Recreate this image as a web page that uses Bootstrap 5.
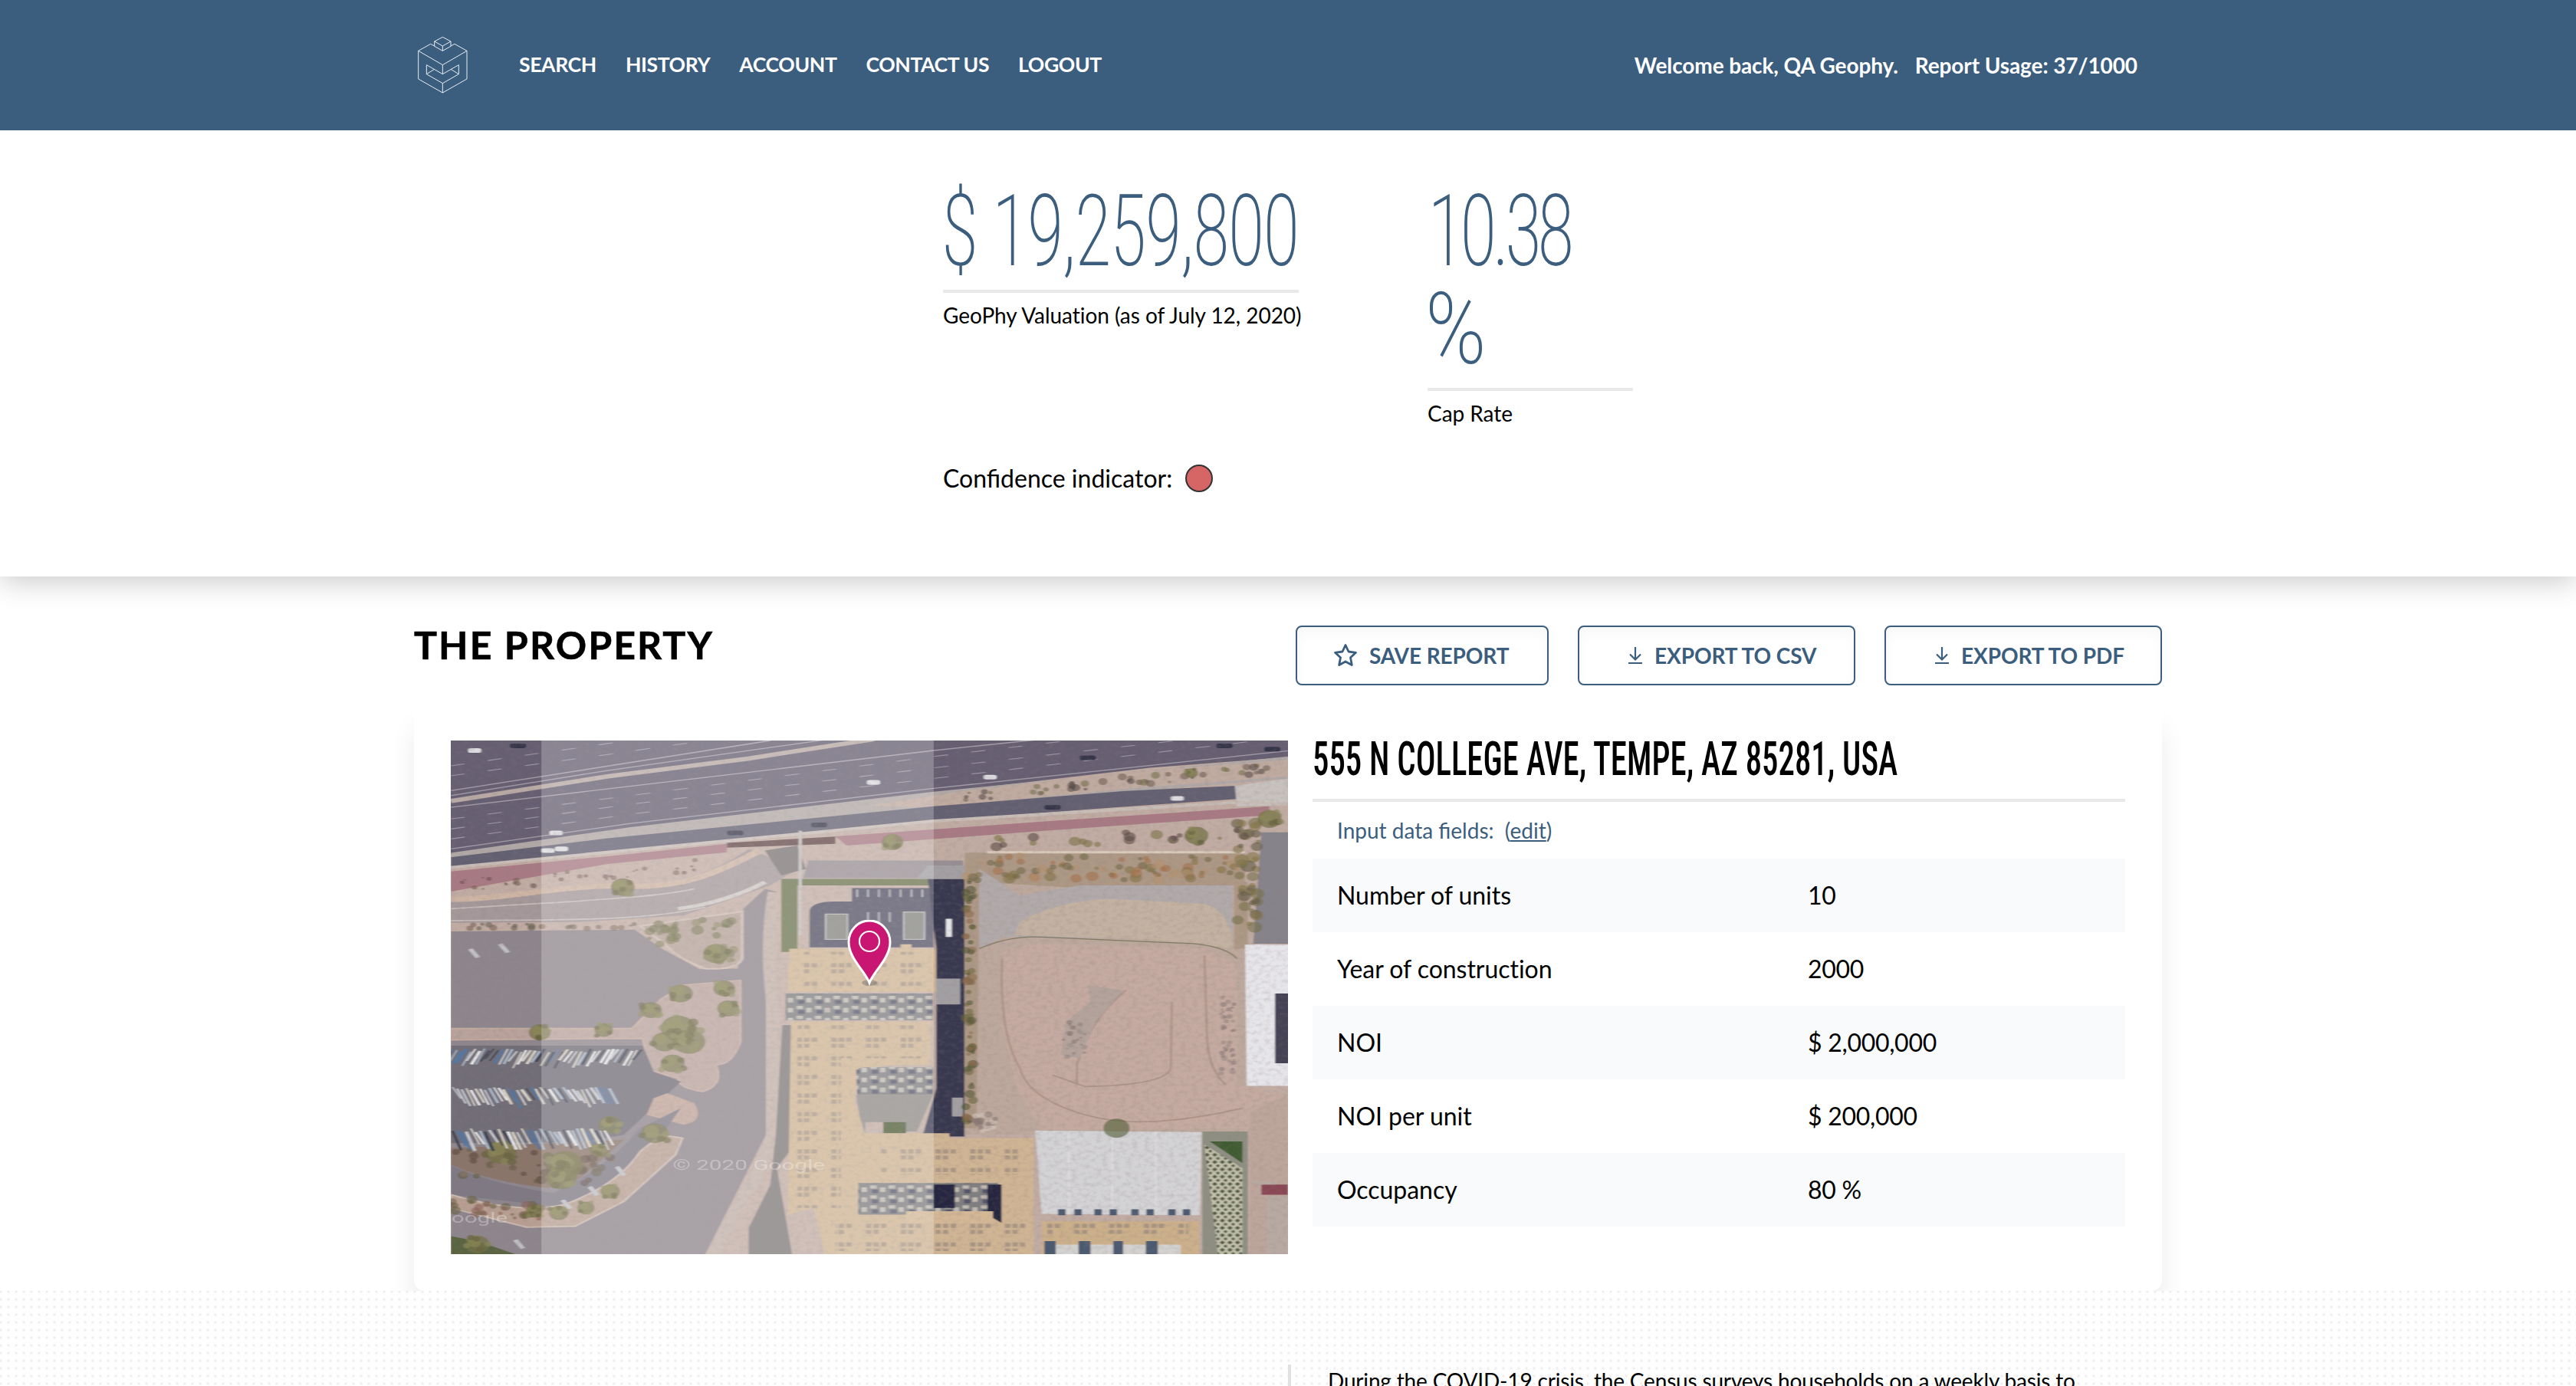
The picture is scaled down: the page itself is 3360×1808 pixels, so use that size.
<!DOCTYPE html>
<html lang="en">
<head>
<meta charset="utf-8">
<title>GeoPhy Valuation Report</title>
<link href="https://cdn.jsdelivr.net/npm/bootstrap@5.3.0/dist/css/bootstrap.min.css" rel="stylesheet">
<style>
:root{--brand:#3b5d7e}
body{font-family:Lato,"Open Sans",sans-serif;font-size:28px;line-height:42px;color:#000;background:#fff;height:1808px;overflow:hidden}
.wrap{width:2280px;margin:0 auto}
.topbar{background:var(--brand);height:170px;font-weight:700;color:#fff;padding:0}
.topbar .nav-link{color:#fff;padding:0;font-size:26.6px;letter-spacing:-.4px}
.topbar .logo{width:75px;height:78px;display:block;margin-right:62px}
.topbar .menu{gap:38px;padding-bottom:2px}
.topbar .greet{margin-right:32px;gap:22px;letter-spacing:-.1px}
.hero{height:582px;padding-top:68px;box-shadow:0 6px 36px rgba(0,0,0,.22);clip-path:inset(0 0 -60px 0);background:#fff}
.hero-in{margin-left:690px}
.figure-v{width:464px;margin-right:168px}
.figure-c{width:268px}
.bignum{font-family:"Roboto Condensed",Roboto,sans-serif;font-weight:200;font-size:129px;line-height:128px;color:var(--brand);white-space:nowrap}
.bignum span{display:block;width:max-content;height:128px;transform-origin:0 0}
.n-val{transform:scaleX(.77);letter-spacing:-3px;margin-left:-2px}
.n-cap{transform:scaleX(.77);letter-spacing:-7.6px}
.n-pct{transform:scaleX(.98);margin-left:-4px}
.bar{height:4px;background:#e8e8e8}
.bignum + .bar{margin:12px 0 8px}
.cap-label{letter-spacing:-.04px;white-space:nowrap}
.conf{font-size:32px;line-height:48px;margin-top:40px}
.lamp{width:36px;height:36px;border-radius:50%;background:#d66565;border:2px solid #333;margin:0 0 0 17px}
.prop-title{font-size:50px;line-height:60px;font-weight:700;letter-spacing:2.1px;margin:0;-webkit-text-stroke:.6px #000}
.prop{padding-top:59px}
.btn-rep{height:78px;border:2px solid var(--brand);border-radius:8px;color:var(--brand);font-weight:700;font-size:28px;letter-spacing:-.1px;padding:0;display:flex;align-items:center;line-height:42px;box-shadow:inset 0 8px 16px rgba(0,0,0,.03)}
.btns{gap:38px;margin-top:5px}
.pcard{margin-top:24px;height:766px;border:0;border-radius:14px;padding:48px;box-shadow:0 32px 36px rgba(0,0,0,.08);clip-path:inset(0 -60px 0 -60px)}
.mapbox{width:1092px;height:670px;margin-right:32px;position:relative;flex:none}
.mapbox .sat{display:block;width:1092px;height:670px}
.pin{position:absolute;left:516px;top:234px;width:60px;height:90px}
.info{flex:1 1 0;min-width:0}
.addr{font-family:"Roboto Condensed",Roboto,sans-serif;font-weight:500;font-size:60.5px;line-height:70px;margin:-10px 0 16px;width:max-content;transform-origin:0 0;white-space:nowrap;transform:scaleX(.708)}
.infield{color:var(--brand);margin:16px 0;padding-left:32px}
.infield a{color:var(--brand)}
.facts>div{height:96px;font-size:32px;line-height:48px;padding:0 0 0 32px;letter-spacing:-.04px}
.facts>div:nth-child(odd){background:#f9fafc}
.facts span:first-child{width:614px}
.facts span:last-child{letter-spacing:-.3px}
.dots{height:124px;padding-top:96px;overflow:hidden;background:radial-gradient(circle at 50% 50%,#e9e9ec 0,#f6f6f7 1.6px,#fefefe 2.6px) -4px -4px/10px 10px}
.covid{margin-left:1140px;border-left:4px solid #e0e0e0;padding-left:48px;height:60px;white-space:nowrap;letter-spacing:-.17px}
</style>
</head>
<body>
<nav class="topbar"><div class="wrap d-flex align-items-center h-100">
  <svg class="logo" viewBox="30 50 225 234" fill="none" stroke="#e8eef3" stroke-width="3"><path d="M142 166 47 111V221L142 275 237 221V111L189 84 174 92M110 92 95 84 47 111M142 166 237 111M142 166V202L79 166V202L142 238 205 202V166L142 202M142 238V275M79 202 110 183M205 202 174 183M142 57 110 74 142 92 174 74ZM110 74V93L142 111 174 93V74M142 92V111"/></svg>
  <div class="menu d-flex"><a class="nav-link" href="#">SEARCH</a><a class="nav-link" href="#">HISTORY</a><a class="nav-link" href="#">ACCOUNT</a><a class="nav-link" href="#">CONTACT US</a><a class="nav-link" href="#">LOGOUT</a></div>
  <div class="greet d-flex ms-auto"><span>Welcome back, QA Geophy.</span><span>Report Usage: 37/1000</span></div>
</div></nav>

<section class="hero"><div class="wrap"><div class="hero-in">
  <div class="d-flex align-items-start">
    <div class="figure-v"><div class="bignum"><span class="n-val">$ 19,259,800</span></div><div class="bar"></div><div class="cap-label">GeoPhy Valuation (as of July 12, 2020)</div></div>
    <div class="figure-c"><div class="bignum"><span class="n-cap">10.38</span><span class="n-pct">%</span></div><div class="bar"></div><div class="cap-label">Cap Rate</div></div>
  </div>
  <div class="conf d-flex align-items-center">Confidence indicator:<span class="lamp"></span></div>
</div></div></section>

<section class="prop wrap">
  <div class="d-flex justify-content-between align-items-start">
    <h2 class="prop-title">THE PROPERTY</h2>
    <div class="btns d-flex">
      <button class="btn btn-rep" style="width:330px;padding-left:46px"><svg width="34" height="34" viewBox="0 0 34 34" fill="none" stroke="#3b5d7e" stroke-width="2.8" stroke-linejoin="round" style="margin-right:14px"><path d="M17 3.500 21 12 30.500 13.300 23.500 19.800 25.300 29.500 17 25 8.700 29.500 10.500 19.800 3.500 13.300 13 12Z"/></svg>SAVE REPORT</button>
      <button class="btn btn-rep" style="width:362px;padding-left:63px"><svg width="20" height="24" viewBox="0 0 20 24" fill="none" stroke="#3b5d7e" stroke-width="2.200" style="margin-right:15px"><path d="M10 1V17M3 10.500 10 17.500 17 10.500M1 22H19"/></svg>EXPORT TO CSV</button>
      <button class="btn btn-rep" style="width:362px;padding-left:63px"><svg width="20" height="24" viewBox="0 0 20 24" fill="none" stroke="#3b5d7e" stroke-width="2.200" style="margin-right:15px"><path d="M10 1V17M3 10.500 10 17.500 17 10.500M1 22H19"/></svg>EXPORT TO PDF</button>
    </div>
  </div>
  <div class="card pcard flex-row">
    <div class="mapbox">
      <svg class="sat" viewBox="11 14 1543 1545" preserveAspectRatio="none">
        <defs>
          <pattern id="roof" width="64" height="56" patternUnits="userSpaceOnUse"><path d="M8 12h10v12H8zM22 12h10v12H22zM36 12h10v12H36zM8 30h10v12H8zM22 30h10v12H22z" fill="#a08f80" opacity=".8"/></pattern>
          <pattern id="balc" width="34" height="30" patternUnits="userSpaceOnUse"><path fill="#7f7e80" d="M0 0h34v30H0z"/><path fill="#c0bab2" d="M2 2h12v10H2zM20 8h10v14H20z"/><path fill="#55566a" d="M5 15h12v11H5z"/></pattern>
          <pattern id="check" width="14" height="22" patternUnits="userSpaceOnUse"><path fill="#c3c2ac" d="M0 0h14v22H0z"/><path fill="#4f5741" d="M0 6 5 0 10 6 5 12ZM7 17l4-5 4 5-4 5Z"/></pattern>
          <filter id="soft"><feGaussianBlur stdDeviation="1.700"/></filter>
          <filter id="ground" x="0" y="0" width="100%" height="100%"><feTurbulence type="fractalNoise" baseFrequency=".09" numOctaves="4" seed="4"/><feColorMatrix values="0 0 0 0 .25 0 0 0 0 .2 0 0 0 0 .2 1.600 0 0 0 -.68"/></filter>
        </defs>
        <g filter="url(#soft)">
        <path fill="#c1aca3" d="M0 0H1570V1570H0z"/>
        <path fill="#665f72" d="M0 0H1570V62L1300 96 901 172 600 232 300 296 0 358z"/>
        <path d="M11 250 340 180 901 62 1150 14M11 280 340 206 901 96 1350 14M11 310 340 236 901 128 1500 14M11 120 300 56 480 14M11 90 340 14" stroke="#9d97a5" stroke-width="2.500" stroke-dasharray="26 44" fill="none"/>
        <path d="M11 196 300 122 560 68 790 10" stroke="#b9aaa5" stroke-width="13" fill="none"/>
        <path d="M11 180 300 104 700 12M11 165 600 14M11 215 901 44 1100 10M11 340 340 264 901 158 1554 45" stroke="#a49daa" stroke-width="3" fill="none"/>
        <path d="M11 352 340 275 901 168 1554 62 1554 128 901 222 300 318 11 378z" fill="#b0a8a6"/>
        <path d="M780 210 960 165 1230 112 1554 72 1554 122 1250 160 901 215z" fill="#c0aba1"/>
        <path d="M11 365 300 308 901 212 1250 166 1460 150 1460 190 1230 216 901 256 300 350 11 396z" fill="#646072"/>
        <path d="M1456 150 1554 128V208L1460 212z" fill="#c8c2bf"/>
        <path d="M11 396 300 350 901 256 1460 200 1554 205" stroke="#c8bcb7" stroke-width="9" fill="none"/>
        <path d="M11 408 300 362 520 325V350L300 385 11 468zM720 302 1100 258 1520 212 1520 238 1100 286 740 330z" fill="#a87a83"/>
        <path d="M520 322 720 303V325L520 336z" fill="#65494a"/>
        <path d="M11 490C120 490 200 450 300 452S480 430 560 340L650 400 600 450 440 540 250 560 11 562z" fill="#a5989a"/>
        <path d="M11 492C120 490 220 448 320 452S470 440 580 345" stroke="#cdb4a4" stroke-width="16" fill="none"/>
        <path d="M430 520Q520 500 590 440" stroke="#cfc8c6" stroke-width="10" fill="none"/>
        <path d="M11 520C200 500 380 490 460 460M11 556C200 552 360 560 480 515" stroke="#c5bcba" stroke-width="4" fill="none"/>
        <path d="M590 345 650 330 665 400 620 420z" fill="#7b7475"/>
        <path fill="#8e868d" d="M11 588 350 583 400 640 470 702 540 700 550 520 590 460 612 470 592 600 592 1200 480 1559H11z"/>
        <path fill="#988f94" d="M670 375H955V428H660z"/>
        <path fill="#b5a297" d="M360 572 548 528V670Q540 705 480 700 430 670 405 625z" stroke="#cdbab0" stroke-width="5"/>
        <path fill="#b9a29b" d="M400 790 440 750 545 735V920Q530 990 500 990 515 1050 475 1070 430 1060 430 1030L375 1005 365 910 11 915V880H345z" stroke="#c5aaa0" stroke-width="4"/>
        <path d="M11 932H365L385 1010 435 1040 330 1200 250 1222 11 1225z" fill="#716d77"/>
        <path fill="#c0a398" d="M385 1090 410 1075 460 1105Q480 1160 440 1170L372 1140z"/>
        <path fill="#8a746a" d="M11 1240 330 1215 300 1260 250 1330 190 1360Q80 1340 11 1290z"/>
        <path fill="#7f7984" d="M11 1292Q90 1350 200 1375 300 1300 360 1180L435 1120 400 1200 330 1330 230 1420 11 1380z"/>
        <path fill="#b89f92" d="M400 1200 438 1210 425 1260 330 1400 240 1475 150 1478 11 1420V1380Q140 1440 220 1410 320 1350 360 1250z" stroke="#cbbab0" stroke-width="4"/>
        <path fill="#596440" d="M11 1505 60 1520 130 1559H11z"/>
        <path d="M606 470Q590 620 603 800V1200Q590 1300 530 1440L495 1559" stroke="#c1b0a8" stroke-width="22" fill="none"/>
        <path fill="#7f7979" d="M622 870H640V1240L612 1300 640 1559H560L560 1480 600 1350 610 1200z"/>
        <path fill="#6d7650" d="M620 430H900V450H650V650H620z"/>
        <path fill="#525165" d="M672 530Q672 498 720 498H750V458H901V636H672z"/>
        <path d="M702 536H742V612H702zM846 530H884V612H846z" fill="#858580" stroke="#b5b5b5" stroke-width="3"/>
        <path d="M760 462V485M780 462V485M800 462V485M820 462V485M840 462V485M860 462V485M880 462V485M780 530V560M800 530V560M820 530V560" stroke="#b3b3bb" stroke-width="3"/>
        <path d="M655 285V600" stroke="#c3bcbb" stroke-width="6"/>
        <path fill="#38374f" d="M890 430H958V1205H880L906 1060V640z"/>
        <path fill="#a3a0a4" d="M905 730H950V808H905zM935 1088H955V1145H935zM890 390H958V430H870z"/>
        <path d="M929 550V605" stroke="#e4e5e6" stroke-width="11"/>
        <path fill="#d0b594" d="M635 640H840V627H860V640H905V770H632zM638 860H895V990H830L765 1000 755 1100 768 1150 770 1230 765 1559H700L680 1420 632 1440zM765 1195H930V1210H1085V1559H700V1430H760z"/>
        <path fill="url(#roof)" d="M660 650H890V755H660zM650 870H890V970H730V1420H650zM800 1220H1060V1320H800zM720 1450H1070V1550H720z"/>
        <path fill="url(#balc)" d="M628 775H900V855H628zM758 1005Q765 995 780 997H900V1080H760zM762 1345H1020V1440H762z"/>
        <path fill="#918c88" d="M758 1080H900L870 1190H808V1162H775V1195L765 1150z"/>
        <path fill="#27283f" d="M901 1350H940V1420H901zM1000 1350H1026V1465L1000 1440z"/>
        <path fill="#d4b896" d="M850 1430H1010V1465H850z"/>
        <path fill="#4f5c34" d="M808 1162H850V1195H808z"/>
        <path fill="#bda89d" d="M958 350H1475V1200H958z"/>
        <path fill="#ad9885" d="M958 352H1475V450H1455L1300 470 985 440 980 1180H958zM1455 440H1480V640H1455z"/>
        <path fill="#b2aaaa" d="M985 400 1060 480 1170 450 1452 450V640L1300 610 1030 605 985 640z"/>
        <path fill="#c3b1a1" d="M1060 560Q1120 500 1220 490L1400 505Q1452 530 1452 640L1300 612 1050 600z"/>
        <path fill="#c4aaa0" d="M1030 650 1080 625 1400 640 1460 690V1050L1554 1080V1180L1100 1185 1055 1060 1025 860z"/>
        <path d="M1027 670Q1022 900 1060 1000 1075 1090 1180 1140T1470 1120M1400 660 1405 920Q1410 1010 1440 1050M1340 800 1338 1000Q1330 1050 1180 1055L1120 1020M1255 765Q1190 850 1165 990L1165 1050" stroke="#ad9388" stroke-width="4" fill="none"/>
        <path d="M985 640Q1040 600 1100 605L1380 625Q1440 635 1460 670" stroke="#7f7a63" stroke-width="3" fill="none"/>
        <path fill="#b3a39c" d="M1185 750 1250 765 1200 860 1170 970 1135 960 1145 860 1190 800z"/>
        <path d="M1000 350H1475" stroke="#d9cbbb" stroke-width="7"/>
        <path fill="#86838a" d="M1505 290H1560V625H1490z"/>
        <path fill="#e6e5e9" d="M1475 628H1560V1053H1478z"/><path fill="#454254" d="M1530 775H1560V985H1530z"/>
        <path fill="#d3d2d4" d="M1088 1187 1395 1192 1392 1442 1100 1438z"/>
        <path d="M1150 1190V1440M1230 1190V1440M1310 1190V1440" stroke="#dedddd" stroke-width="3"/>
        <path fill="#ccb08b" d="M1100 1460H1390V1559H1100z"/><path fill="url(#roof)" d="M1110 1466H1370V1510H1110z"/>
        <path fill="#d3d2d0" d="M1126 1530H1168V1559H1126zM1190 1530H1232V1559H1190zM1250 1530H1292V1559H1250zM1314 1530H1356V1559H1314z"/>
        <path fill="#4b5a70" d="M1105 1520H1126V1559H1105zM1168 1520H1190V1559H1168zM1232 1520H1250V1559H1232zM1292 1520H1314V1559H1292zM1130 1424h14v18h-14zM1160 1424h14v18h-14zM1197 1424h14v18h-14zM1225 1424h14v18h-14zM1265 1424h14v18h-14zM1293 1424h14v18h-14zM1333 1424h14v18h-14zM1360 1424h14v18h-14z"/>
        <path fill="#8e8f82" d="M1396 1190H1480V1559H1396z"/><path fill="url(#check)" d="M1400 1230 1470 1300V1559H1425z"/>
        <path fill="#405b31" d="M1410 1220H1470V1285z"/>
        <path fill="#bca59b" d="M1484 1130 1554 1080V1559H1484z"/><path fill="#8a4654" d="M1505 1350H1554V1380H1505z"/><path fill="#b8aaa3" d="M1490 1340H1530V1350H1490zM1515 1385H1554V1559H1515z"/>
        <g id="scatter"></g>
        </g>
        <rect x="11" y="14" width="1543" height="1545" filter="url(#ground)" opacity=".28"/>
        <path fill="#fff" opacity=".24" d="M178 14H901V1559H178z"/>
        <g fill="#fff" opacity=".3" font-family="Roboto,sans-serif"><text x="12" y="1465" font-size="42">oogle</text><text x="420" y="1305" font-size="42">© 2020 Google</text></g>
      </svg>
      <svg class="pin" viewBox="-30 -30 60 90"><ellipse cx="0" cy="52" rx="10" ry="4" fill="#555" opacity=".35"/><path d="M0 52C-5 38-27 20-27-1A27 28 0 0 1 27-1C27 20 5 38 0 52Z" fill="#c81672" stroke="#fff" stroke-width="3"/><circle cy="-2" r="13" fill="none" stroke="#fff" stroke-width="2.200"/></svg>
    </div>
    <div class="info">
      <h3 class="addr">555 N COLLEGE AVE, TEMPE, AZ 85281, USA</h3>
      <div class="bar"></div>
      <div class="infield">Input data fields: &nbsp;(<a href="#">edit</a>)</div>
      <div class="facts">
        <div class="d-flex align-items-center"><span>Number of units</span><span>10</span></div>
        <div class="d-flex align-items-center"><span>Year of construction</span><span>2000</span></div>
        <div class="d-flex align-items-center"><span>NOI</span><span>$ 2,000,000</span></div>
        <div class="d-flex align-items-center"><span>NOI per unit</span><span>$ 200,000</span></div>
        <div class="d-flex align-items-center"><span>Occupancy</span><span>80 %</span></div>
      </div>
    </div>
  </div>
</section>

<section class="dots"><div class="wrap"><div class="covid">During the COVID-19 crisis, the Census surveys households on a weekly basis to</div></div></section>

<script src="https://cdn.jsdelivr.net/npm/bootstrap@5.3.0/dist/js/bootstrap.bundle.min.js"></script>
<script>
// Vegetation, parked boats and cars on the aerial view
let seed=7;const rnd=()=>(seed=(seed*16807)%2147483647)/2147483647;
let out='';
const blob=(x,y,r,c,o=.8)=>out+=`<ellipse cx="${x}" cy="${y}" rx="${r}" ry="${r*1.2}" fill="${c}" opacity="${o}"/>`;
const shrubs=(x,y,w,h,n,r,cs,sl=0)=>{for(let i=0;i<n;i++){const u=rnd();blob(x+u*w,y+rnd()*h+u*sl,r*(.5+rnd()),cs[i%cs.length],.6);}};
shrubs(960,165,590,30,45,6,['#6f6054','#75704b','#594d4a'],-85);
shrubs(20,430,460,40,32,4,['#6a4c4c','#775c50'],-60);
shrubs(11,565,340,15,22,5,['#7a6353','#656150']);
shrubs(370,565,60,70,18,8,['#76734d','#6c6a48'],0);shrubs(460,550,75,130,22,8,['#837e59','#6c6a48']);
shrubs(962,360,500,75,90,8,['#84734a','#a5714d','#716848','#b4916f']);
shrubs(960,440,14,740,70,7,['#6c6841','#8e6a4c','#54583a']);
shrubs(1460,250,40,340,40,10,['#77704b','#85774a','#605a44']);
shrubs(1010,300,470,35,22,8,['#5c4b46','#7c7246'],-20);
shrubs(15,1240,300,90,55,7,['#5b4940','#8c7567','#635d42'],20);
shrubs(11,1390,170,50,34,7,['#77664e','#8a6357','#686344'],20);
shrubs(1430,780,25,240,45,4,['#8b7a78','#9b8984']);
shrubs(1140,860,40,110,25,4,['#9a8d88','#86766f']);
shrubs(975,1130,40,60,20,6,['#d2c5bb','#86766f']);
[[328,455,22],[435,775,22],[515,760,20],[522,820,20],[430,880,32],[450,920,30],[405,920,24],[420,985,22],[380,825,20],[500,655,24],[175,892,20],[293,885,17],[103,1252,29],[222,1290,34],[215,1330,28],[305,1170,22],[387,1195,25],[285,1245,18],[305,1370,18],[260,1420,16],[210,1435,18],[165,1430,16],[825,320,20],[1385,300,22],[1520,250,22],[1376,112,12],[60,1530,22]].forEach(([x,y,r])=>{blob(x,y,r,'#737046',.75);blob(x-r*.25,y-r*.3,r*.55,'#8a8755',.7);for(let i=0;i<7;i++)blob(x+(rnd()-.5)*r*1.9,y+(rnd()-.5)*r*2.200,r*.3,i%2?'#66633e':'#89855a',.7);});
blob(1238,1180,24,'#4f5c34',.6);
[[940,50,370],[1055,55,310],[1180,60,300]].forEach(([y,h,w],k)=>{for(let x=14;x<w;x+=8.5){const c=['#e8e8ea','#c9ccd2','#5577a0','#d6d2c6','#3e4250','#a9b6c6'][Math.floor(rnd()*6)];const s=k?1:-1;out+=`<path d="M${x} ${y+rnd()*12}l${s*16} ${h*(.6+rnd()*.4)}" stroke="${c}" stroke-width="${2.5+rnd()*3.5}"/>`;}});
[[55,44],[790,140],[1005,124],[1350,188],[205,292],[190,345],[215,340]].forEach(([x,y])=>out+=`<rect x="${x-12}" y="${y-7}" width="24" height="14" rx="5" fill="#dcdbdf"/>`);
[[135,30],[1185,66],[1437,30],[1525,40],[1120,215],[690,268],[535,292]].forEach(([x,y])=>out+=`<rect x="${x-15}" y="${y-7}" width="30" height="14" rx="5" fill="#35344a"/>`);
[[55,655],[110,640],[325,1310],[275,1370],[138,1530],[225,1410]].forEach(([x,y])=>out+=`<path d="M${x-8} ${y-14}l14 26" stroke="#c0c0c5" stroke-width="9"/>`);
document.getElementById('scatter').innerHTML=out;
</script>
</body>
</html>
